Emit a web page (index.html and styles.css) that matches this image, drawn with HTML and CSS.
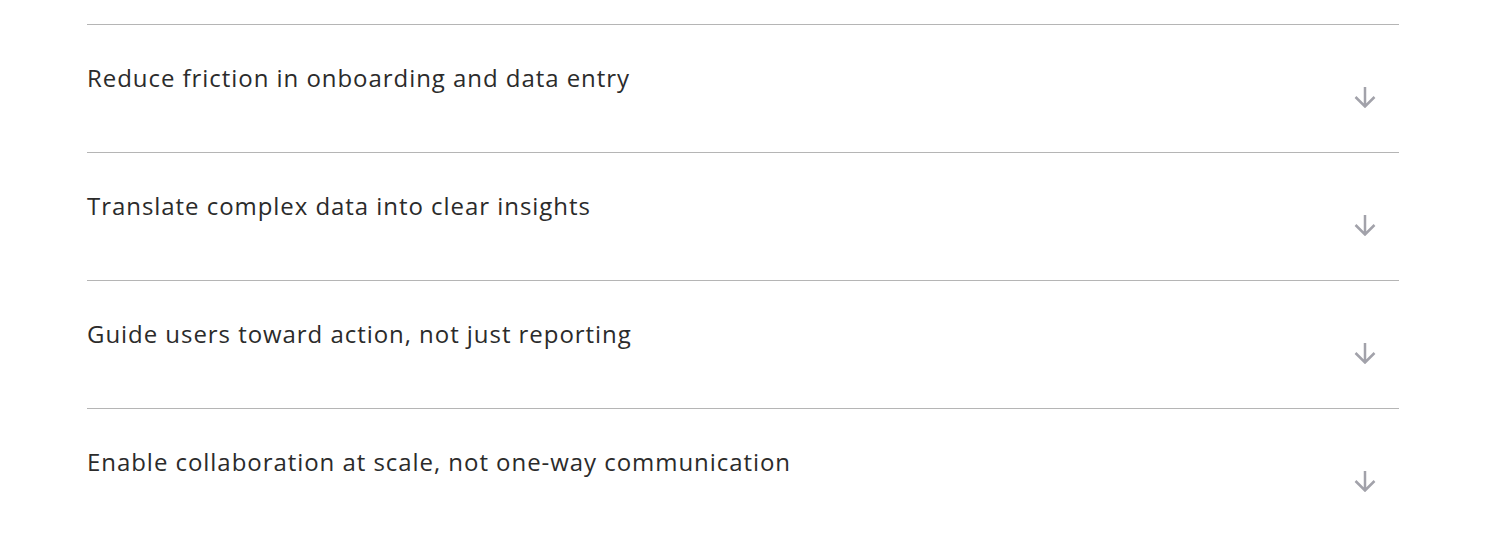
FILE: index.html
```html
<!DOCTYPE html>
<html>
<head>
<meta charset="utf-8">
<link rel="stylesheet" href="styles.css">
</head>
<body>
<div class="list">
  <div class="item">
    <span class="label">Reduce friction in onboarding and data entry</span>
    <svg class="arrow" viewBox="0 0 22 22" width="22" height="22"><path d="M11 1v19M1.5 11l9.5 9.5 9.5-9.5" fill="none" stroke="#a2a2aa" stroke-width="2.5"/></svg>
  </div>
  <div class="item">
    <span class="label">Translate complex data into clear insights</span>
    <svg class="arrow" viewBox="0 0 22 22" width="22" height="22"><path d="M11 1v19M1.5 11l9.5 9.5 9.5-9.5" fill="none" stroke="#a2a2aa" stroke-width="2.5"/></svg>
  </div>
  <div class="item">
    <span class="label">Guide users toward action, not just reporting</span>
    <svg class="arrow" viewBox="0 0 22 22" width="22" height="22"><path d="M11 1v19M1.5 11l9.5 9.5 9.5-9.5" fill="none" stroke="#a2a2aa" stroke-width="2.5"/></svg>
  </div>
  <div class="item">
    <span class="label">Enable collaboration at scale, not one-way communication</span>
    <svg class="arrow" viewBox="0 0 22 22" width="22" height="22"><path d="M11 1v19M1.5 11l9.5 9.5 9.5-9.5" fill="none" stroke="#a2a2aa" stroke-width="2.5"/></svg>
  </div>
</div>
</body>
</html>
```
FILE: styles.css
```css
html, body {
  margin: 0;
  padding: 0;
  background: #ffffff;
}
.list {
  padding: 24px 113px 0 87px;
  display: flex;
  flex-direction: column;
}
.item {
  border-top: 1px solid #b5b5b5;
  height: 127px;
  display: flex;
  justify-content: space-between;
  align-items: flex-start;
}
.label {
  font-family: "Open Sans", sans-serif;
  font-size: 24px;
  line-height: 30px;
  color: #2b2b2b;
  padding-top: 38px;
  letter-spacing: 0.95px;
}
.arrow {
  margin-top: 61px;
  margin-right: 23px;
}
```
